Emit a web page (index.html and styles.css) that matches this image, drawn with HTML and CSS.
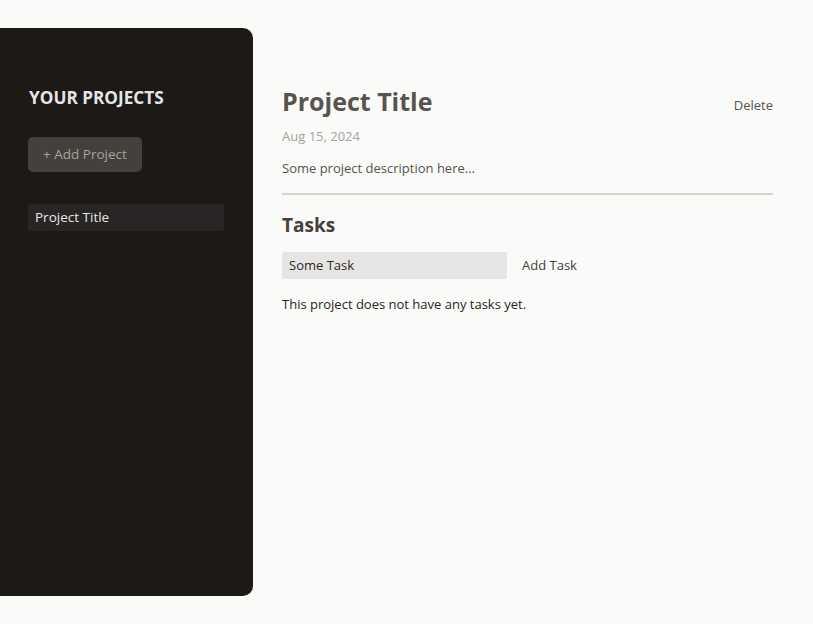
FILE: index.html
```html
<!DOCTYPE html>
<html lang="en">
<head>
<meta charset="utf-8">
<title>Projects</title>
<link rel="stylesheet" href="styles.css">
</head>
<body>
<main class="app">
  <aside class="sidebar">
    <h2 class="sidebar-title">Your Projects</h2>
    <div><button class="add-project">+ Add Project</button></div>
    <ul class="project-list">
      <li><button class="project-item">Project Title</button></li>
    </ul>
  </aside>
  <div class="project">
    <header class="project-header">
      <div class="title-row">
        <h1 class="project-title">Project Title</h1>
        <button class="delete">Delete</button>
      </div>
      <p class="project-date">Aug 15, 2024</p>
      <p class="project-desc">Some project description here...</p>
    </header>
    <section class="tasks">
      <h2 class="tasks-title">Tasks</h2>
      <div class="task-form">
        <input class="task-input" type="text" value="Some Task">
        <button class="add-task">Add Task</button>
      </div>
      <p class="empty">This project does not have any tasks yet.</p>
    </section>
  </div>
</main>
</body>
</html>
```
FILE: styles.css
```css
* { box-sizing: border-box; }
html { font-size: 14px; }
body {
  margin: 0;
  background: #fafaf9;
  font-family: "Open Sans", "Noto Sans", sans-serif;
  font-size: 14px;
  line-height: 21px;
  color: #1c1917;
}
button, input {
  font: inherit;
  border: 0;
  background: none;
  margin: 0;
  padding: 0;
  color: inherit;
}
p, h1, h2, ul { margin: 0; padding: 0; }
.app {
  display: flex;
  gap: 29px;
  margin-top: 28px;
  height: 568px;
}
.sidebar {
  width: 253px;
  flex: none;
  padding: 56px 28px;
  background: #1c1917;
  color: #e7e5e4;
  border-radius: 0 10px 10px 0;
}
.sidebar-title {
  font-size: 17.2px;
  line-height: 24.5px;
  font-weight: 700;
  text-transform: uppercase;
  color: #e7e5e4;
  margin-bottom: 26px;
  padding-top: 2px;
  margin-left: 1px;
}
.add-project {
  padding: 7px 15px;
  border-radius: 5px;
  background: #44403c;
  color: #a8a29e;
  font-size: 13.5px;
}
.project-list {
  list-style: none;
  margin-top: 32px;
}
.project-item {
  display: block;
  width: 196px;
  text-align: left;
  padding: 3px 7px;
  margin: 3.5px 0;
  border-radius: 2px;
  background: #292524;
  color: #e7e5e4;
  font-size: 13.5px;
}
.project {
  width: 491px;
  margin-top: 56px;
}
.project-header {
  padding-bottom: 14px;
  margin-bottom: 14px;
  border-bottom: 2px solid #d6d3d1;
}
.title-row {
  display: flex;
  align-items: center;
  justify-content: space-between;
  padding-top: 2px;
}
.project-title {
  font-size: 25px;
  line-height: 31.5px;
  font-weight: 700;
  color: #57534e;
  margin-bottom: 8px;
}
.delete { color: #57534e; font-size: 13px; }
.project-date { color: #a8a29e; margin-bottom: 11px; font-size: 13px; }
.project-desc { color: #57534e; font-size: 13px; }
.tasks-title {
  font-size: 19px;
  line-height: 28px;
  font-weight: 700;
  color: #44403c;
  margin-bottom: 13px;
  padding-top: 2px;
}
.task-form {
  display: flex;
  align-items: center;
  gap: 15px;
}
.task-input {
  width: 225px;
  padding: 3px 7px;
  border-radius: 2px;
  background: #e7e5e4;
  color: #292524;
  font-size: 13px;
  outline: none;
}
.add-task { color: #44403c; font-size: 13px; }
.empty { color: #292524; margin: 15px 0; font-size: 13px; }
```
